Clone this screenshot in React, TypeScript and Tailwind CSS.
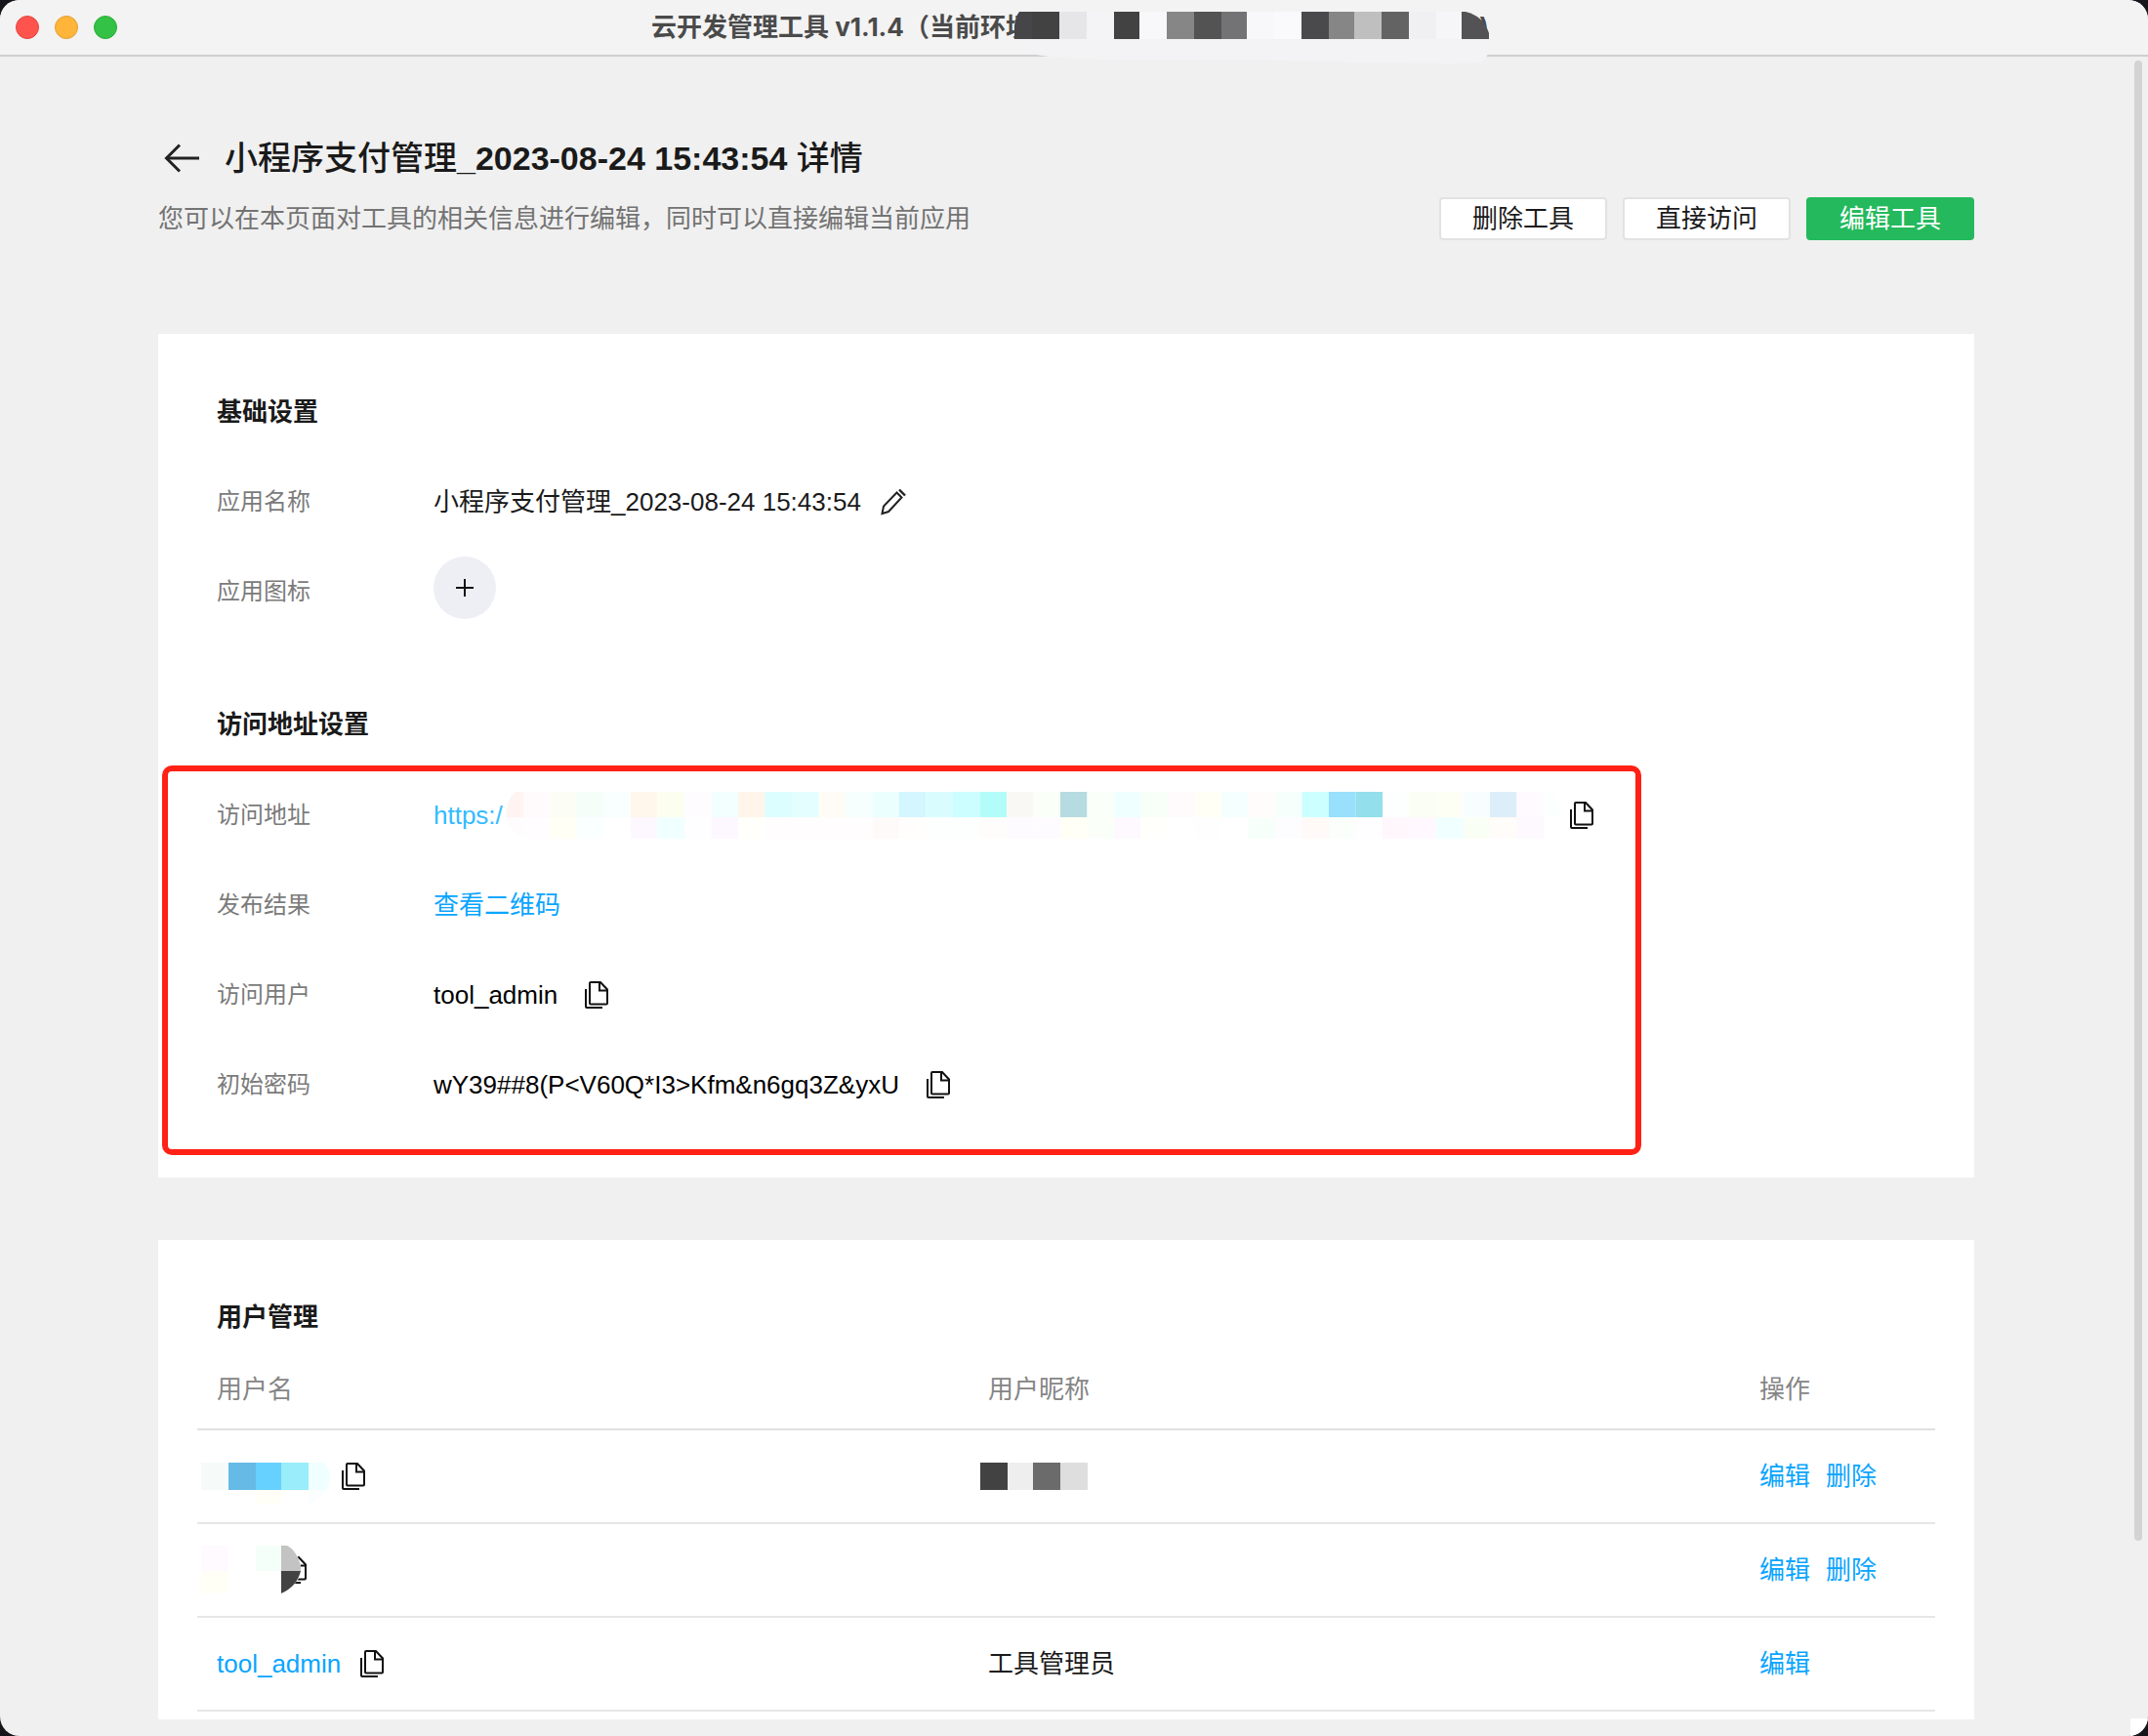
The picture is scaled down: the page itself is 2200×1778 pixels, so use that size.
import type { ReactNode } from "react";

const urlTop = [
  "#fff4f2", "#fffafc", "#fcfef6", "#f5fef8", "#f8fffe", "#fff6ec", "#fcfff0", "#fefcff", "#f2fffe", "#fff5ea",
  "#dcfeff", "#e4feff", "#fffcf6", "#f7fffe", "#eafffe", "#d3f6ff", "#d9fdff", "#ccfdff", "#b2fdf9", "#faf8f4",
  "#fafff8", "#b6dbe0", "#fbfffa", "#efffff", "#f8fff8", "#fffafb", "#fffff5", "#f5ffff", "#fffcfb", "#f7fffc",
  "#ccffff", "#98e0fb", "#93dfec", "#fdffff", "#fbfef4", "#fdfef4", "#f8fdff", "#dceef9", "#fefaff", "#fbfffe",
];

const urlBottom = [
  "#fffcfd", "#fffdff", "#fffff5", "#faffff", "#ffffff", "#fdf8ff", "#f0ffff", "#fefdff", "#fdf7ff", "#fffffb",
  "#fffdfd", "#fffdfd", "#fffdfd", "#fffdfd", "#fffafa", "#fffefc", "#fcfffe", "#fcfffe", "#fffdfb", "#fdfbff",
  "#fdfbff", "#fffff5", "#fafff9", "#fef9ff", "#fffffb", "#ffffff", "#fefefe", "#ffffff", "#f6fffa", "#fdfcff",
  "#fff9f7", "#fafffb", "#fefdff", "#fff7fb", "#fff8ff", "#f0ffff", "#fafff6", "#fffcf9", "#fdf9ff", "#ffffff",
];

// [x, width, fill]
const titleBlocks: [number, number, string][] = [
  [0, 18, "#464648"], [18, 28, "#424242"], [46, 28, "#e6e6e8"], [74, 28, "#f4f4f6"], [102, 26, "#424242"],
  [128, 28, "#f8f8fa"], [156, 28, "#868686"], [184, 28, "#535353"], [212, 26, "#737375"], [238, 28, "#f8f8fa"],
  [266, 28, "#fafafc"], [294, 28, "#4a4a4c"], [322, 26, "#868686"], [348, 28, "#bfbfbf"], [376, 28, "#636363"],
  [404, 28, "#f0f0f2"], [432, 26, "#f6f6f8"], [458, 28, "#535355"],
];

function TitleMosaic() {
  return (
    <svg className="absolute left-0 top-3" width="486" height="54" viewBox="0 0 486 54" aria-hidden="true">
      <defs>
        <clipPath id="title-clip">
          <path d="M5 0H462Q480 4 486 22V28H0V14Q1 5 5 0Z" />
        </clipPath>
      </defs>
      <path d="M2 26H486V38Q484 53 470 53C400 54 300 50 240 49C150 49 60 51 22 44Q4 40 2 26Z" fill="#f3f3f5" />
      <g clipPath="url(#title-clip)">
        {titleBlocks.map(([x, w, fill]) => (
          <rect key={x} x={x} y="0" width={w} height="28" fill={fill} />
        ))}
      </g>
    </svg>
  );
}

function UrlMosaic() {
  return (
    <svg className="relative -ml-[7px] shrink-0" width="1092" height="48" viewBox="0 0 1092 48" aria-hidden="true">
      <defs>
        <clipPath id="url-clip">
          <path d="M20 0H1078Q1088 4 1092 24V36Q1086 48 1066 48H40Q16 46 10 28Q10 8 20 0Z" />
        </clipPath>
      </defs>
      <g clipPath="url(#url-clip)">
        <rect width="1092" height="48" fill="#fff" />
        {urlTop.map((fill, i) => (
          <rect key={i} x={0.5 + i * 27.5} y="0" width="27.5" height="26" fill={fill} />
        ))}
        {urlBottom.map((fill, i) => (
          <rect key={i} x={0.5 + i * 27.5} y="26" width="27.5" height="22" fill={fill} />
        ))}
      </g>
    </svg>
  );
}

function CopyButton({ className = "" }: { className?: string }) {
  return (
    <button type="button" aria-label="复制" className={`shrink-0 ${className}`}>
      <svg width="24" height="28" viewBox="0 0 24 28" fill="none" stroke="#111" strokeWidth="2">
        <path d="M6 1H16L23 8.5V22.5Q23 23.5 22 23.5H6Q5 23.5 5 22.5V2Q5 1 6 1Z" />
        <path d="M15 1V9.5H23" />
        <path d="M1 8V26Q1 27 2 27H18" />
      </svg>
    </button>
  );
}

function Row({ label, children }: { label: string; children?: ReactNode }) {
  return (
    <div className="flex h-14 items-center">
      <dt className="w-[222px] shrink-0 text-2xl text-[#7b7b7b]">{label}</dt>
      <dd className="flex items-center">{children}</dd>
    </div>
  );
}

function RowActions({ removable }: { removable?: boolean }) {
  return (
    <div className="flex gap-4 text-[#0aa5ff]">
      <a href="#edit">编辑</a>
      {removable && <a href="#delete">删除</a>}
    </div>
  );
}

const heading = "text-[26px] leading-9 font-bold";
const plainButton = "h-11 w-[172px] rounded-sm border-2 border-[#e2e2e2] bg-white";

export default function App() {
  return (
    <div className="min-h-screen bg-[#16161a] font-['Liberation_Sans','Noto_Sans_CJK_SC',sans-serif] text-[26px] leading-9 text-[#1a1a1a]">
      <div className="flex min-h-screen flex-col overflow-hidden rounded-[20px] bg-[#f0f0f0]">
        <header className="flex h-[58px] items-center border-b-2 border-[#cfcfcf] bg-[#f3f3f3]">
          <div className="flex w-[120px] gap-4 pl-4">
            <span className="size-6 rounded-full border border-[#e2463f] bg-[#ff544d]" />
            <span className="size-6 rounded-full border border-[#e0a034] bg-[#ffb43a]" />
            <span className="size-6 rounded-full border border-[#2bac38] bg-[#33c245]" />
          </div>
          <div className="flex h-full flex-1 items-center justify-center pr-32 font-['Inter','Noto_Sans_CJK_SC',sans-serif] font-bold text-[#4a4a4a]">
            <h1 className="-mr-[17px] whitespace-nowrap">云开发管理工具 v1.1.4（当前环境</h1>
            <div className="relative flex h-14 w-[486px] items-center justify-end">
              <span>)</span>
              <TitleMosaic />
            </div>
          </div>
        </header>

        <div className="flex flex-1">
          <main className="flex-1 pr-40 pl-[162px] pt-20">
            <div className="flex h-12 items-center">
              <button type="button" aria-label="返回" className="ml-1.5 mr-[26px]">
                <svg width="36" height="30" viewBox="0 0 36 30" fill="none" stroke="#222" strokeWidth="3">
                  <path d="M2 15H36" />
                  <path d="M16 1.5L2.5 15L16 28.5" />
                </svg>
              </button>
              <h2 className="text-[34px] leading-[48px] font-bold">
                <span className="font-medium">小程序支付管理</span>_2023-08-24 15:43:54 <span className="font-medium">详情</span>
              </h2>
            </div>
            <div className="mt-4 flex items-center justify-between">
              <p className="text-[#737373]">您可以在本页面对工具的相关信息进行编辑，同时可以直接编辑当前应用</p>
              <div className="flex gap-4">
                <button type="button" className={plainButton}>删除工具</button>
                <button type="button" className={plainButton}>直接访问</button>
                <button type="button" className="h-11 w-[172px] rounded-sm bg-[#24b95c] text-white">编辑工具</button>
              </div>
            </div>

            <section className="mt-24 bg-white pt-[62px] pb-[23px]">
              <div className="px-[60px]">
                <h3 className={heading}>基础设置</h3>
                <dl className="mt-[46px] flex flex-col gap-9">
                  <Row label="应用名称">
                    小程序支付管理_2023-08-24 15:43:54
                    <button type="button" aria-label="编辑名称" className="ml-5">
                      <svg width="26" height="28" viewBox="0 0 26 28" fill="none" stroke="#222" strokeWidth="2">
                        <path d="M1.5 26L3 18.5L16.5 4.5L21.5 9.5L8 24Z" />
                        <path d="M19 1.5L25 7.5" strokeWidth="2.4" />
                      </svg>
                    </button>
                  </Row>
                  <Row label="应用图标">
                    <button
                      type="button"
                      aria-label="上传图标"
                      className="mb-2 flex size-16 items-center justify-center rounded-full bg-[#eeeff4]"
                    >
                      <svg width="18" height="18" viewBox="0 0 18 18" stroke="#111" strokeWidth="2">
                        <path d="M9 0V18M0 9H18" />
                      </svg>
                    </button>
                  </Row>
                </dl>
                <h3 className={`mt-[90px] ${heading}`}>访问地址设置</h3>
              </div>

              <dl className="mt-6 ml-1 flex w-fit flex-col gap-9 rounded-[10px] border-[6px] border-[#ff2116] pt-[17px] pr-[43px] pb-[38px] pl-[50px]">
                <Row label="访问地址">
                  <a href="#open" className="text-[#33bbff]">https:/</a>
                  <UrlMosaic />
                  <CopyButton className="ml-2" />
                </Row>
                <Row label="发布结果">
                  <a href="#qrcode" className="text-[#0aa5ff]">查看二维码</a>
                </Row>
                <Row label="访问用户">
                  <span className="text-black">tool_admin</span>
                  <CopyButton className="ml-7" />
                </Row>
                <Row label="初始密码">
                  <span className="text-black">{"wY39##8(P<V60Q*I3>Kfm&n6gq3Z&yxU"}</span>
                  <CopyButton className="ml-7" />
                </Row>
              </dl>
            </section>

            <section className="mt-16 bg-white px-10 pt-[61px] pb-2">
              <h3 className={`px-5 ${heading}`}>用户管理</h3>
              <table className="mt-4 w-full table-fixed border-separate border-spacing-0 text-left [&_td]:h-24 [&_td]:border-b-2 [&_td]:border-[#e6e6e6] [&_td]:px-5 [&_th]:h-[82px] [&_th]:border-b-2 [&_th]:border-[#e0e0e0] [&_th]:px-5 [&_th]:font-normal [&_th]:text-[#858585]">
                <thead>
                  <tr>
                    <th>用户名</th>
                    <th>用户昵称</th>
                    <th className="w-[200px]">操作</th>
                  </tr>
                </thead>
                <tbody>
                  <tr>
                    <td>
                      <div className="flex items-center">
                        <svg className="-ml-4 overflow-visible" width="132" height="28" viewBox="0 0 132 28" aria-hidden="true">
                          <rect width="28" height="28" fill="#f6fbfa" />
                          <rect x="28" width="28" height="28" fill="#66bbe6" />
                          <rect x="56" width="26" height="28" fill="#66d0ff" />
                          <rect x="82" width="28" height="28" fill="#9aedfa" />
                          <path d="M110 0H126Q132 6 132 16Q131 24 128 28H110Z" fill="#f0ffff" />
                          <rect x="56" y="28" width="26" height="14" fill="#fffff8" />
                          <path d="M110 28H128Q122 38 110 42Z" fill="#fafeff" />
                        </svg>
                        <CopyButton className="ml-3" />
                      </div>
                    </td>
                    <td>
                      <svg className="-ml-2" width="110" height="28" viewBox="0 0 110 28" aria-hidden="true">
                        <rect width="28" height="28" fill="#424242" />
                        <rect x="28" width="26" height="28" fill="#eeeeee" />
                        <rect x="54" width="28" height="28" fill="#6b6b6b" />
                        <rect x="82" width="28" height="28" fill="#dedede" />
                      </svg>
                    </td>
                    <td><RowActions removable /></td>
                  </tr>
                  <tr>
                    <td>
                      <div className="flex items-center">
                        <svg className="relative z-10 -ml-4" width="102" height="50" viewBox="0 0 102 50" aria-hidden="true">
                          <path d="M0 0H88Q96 4 102 18V30Q96 42 82 50H0Z" fill="#fff" />
                          <rect width="28" height="26" fill="#fffaff" />
                          <rect y="26" width="28" height="23" fill="#fffff6" />
                          <rect x="56" width="26" height="26" fill="#f5fffa" />
                          <path d="M82 0H88Q97 4 102 20V26H82Z" fill="#c3c3c3" />
                          <path d="M82 26H102Q98 42 82 49Z" fill="#424242" />
                        </svg>
                        <CopyButton className="-ml-[18px]" />
                      </div>
                    </td>
                    <td />
                    <td><RowActions removable /></td>
                  </tr>
                  <tr>
                    <td>
                      <div className="flex items-center">
                        <a href="#tool_admin" className="text-[#0aa5ff]">tool_admin</a>
                        <CopyButton className="ml-5" />
                      </div>
                    </td>
                    <td>工具管理员</td>
                    <td><RowActions /></td>
                  </tr>
                </tbody>
              </table>
            </section>
          </main>

          <div className="flex w-[18px] flex-col justify-between pt-1">
            <div className="ml-1 h-[1516px] w-2 rounded-full bg-[#d3d3d3]" />
            <div className="h-[18px] bg-white" />
          </div>
        </div>
      </div>
    </div>
  );
}
